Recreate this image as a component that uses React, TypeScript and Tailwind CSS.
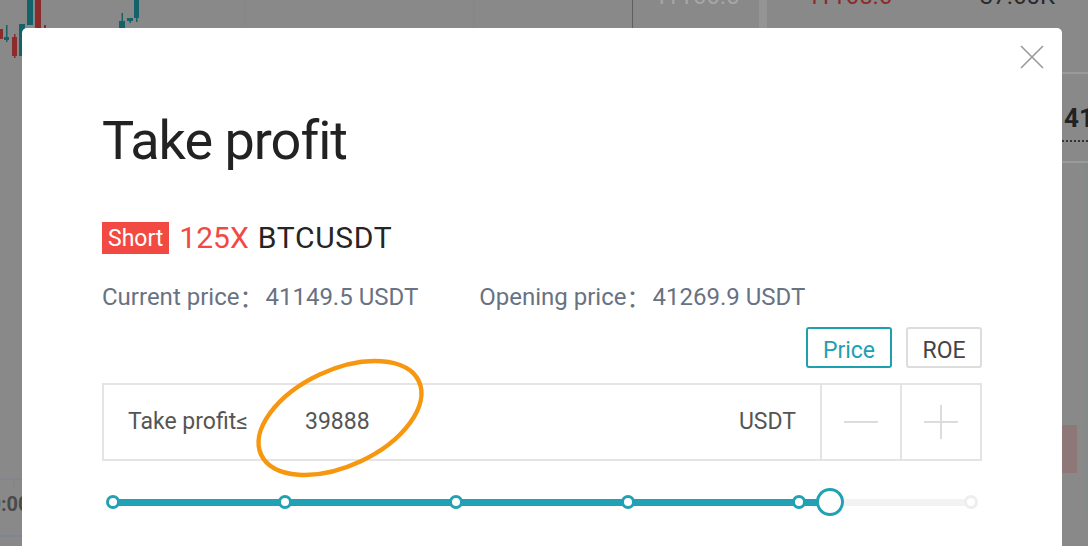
import React from 'react';

const candles = [
  { x: 0, w: 3, top: 29, bottom: 39, wt: 29, wb: 39, c: '#8b2b2b' },
  { x: 4, w: 5, top: 37, bottom: 40, wt: 25, wb: 42, c: '#14626a' },
  { x: 12, w: 5, top: 37, bottom: 56, wt: 34, wb: 58, c: '#8b2b2b' },
  { x: 19, w: 6, top: 24, bottom: 56, wt: 24, wb: 56, c: '#14626a' },
  { x: 27, w: 6, top: 0, bottom: 25, wt: 0, wb: 25, c: '#14626a' },
  { x: 35, w: 6, top: 0, bottom: 28, wt: 0, wb: 28, c: '#8b2b2b' },
  { x: 44, w: 2, top: 25, bottom: 30, wt: 25, wb: 30, c: '#8b2b2b' },
  { x: 119, w: 6, top: 21, bottom: 28, wt: 13, wb: 28, c: '#14626a' },
  { x: 127, w: 6, top: 18, bottom: 21, wt: 18, wb: 23, c: '#14626a' },
  { x: 134, w: 5, top: 0, bottom: 18, wt: 0, wb: 22, c: '#14626a' },
];

const Backdrop = () => (
  <div className="flex h-full w-full">
    {/* chart */}
    <div className="relative h-full w-[633px] shrink-0 border-r border-[#5f5f5f]">
      <svg className="absolute inset-0" width="633" height="546">
        <line x1="245" y1="0" x2="245" y2="546" stroke="#858585" />
        <line x1="474" y1="0" x2="474" y2="546" stroke="#858585" />
        {candles.map((k, i) => (
          <g key={i}>
            <rect x={k.x + k.w / 2 - 0.5} y={k.wt} width="1.5" height={k.wb - k.wt} fill={k.c} />
            <rect x={k.x} y={k.top} width={k.w} height={k.bottom - k.top} fill={k.c} />
          </g>
        ))}
        <line x1="0" y1="479" x2="633" y2="479" stroke="#7d8290" />
        <line x1="14" y1="479" x2="14" y2="488" stroke="#7d8290" />
        <line x1="0" y1="536" x2="633" y2="536" stroke="#7d8694" strokeWidth="2" />
      </svg>
      <span className="absolute left-[-22px] top-[494px] text-[20px] font-bold leading-none text-[#4a4a4a]">10:00</span>
    </div>
    {/* price axis */}
    <div className="flex h-full w-[126px] shrink-0 justify-center overflow-hidden">
      <span className="mt-[-16px] text-[24px] leading-none text-[#a6a6a6]">41166.0</span>
    </div>
    <div className="h-full w-[8px] shrink-0 bg-[#949494]" />
    {/* order book */}
    <div className="flex h-full min-w-0 flex-1">
      <div className="flex w-[295px] shrink-0 items-start justify-between overflow-hidden pl-[38px] pr-[7px]">
        <span className="mt-[-16px] text-[24px] leading-none text-[#8b2b2b]">41165.6</span>
        <span className="mt-[-16px] text-[24px] leading-none text-[#2a2a2a]">37.60K</span>
      </div>
      <div className="relative flex min-w-0 flex-1 flex-col overflow-hidden">
        <div className="mt-[72px] h-[2px] bg-[#9a9a9a]" />
        <span className="mt-[31px] whitespace-nowrap pl-[2px] text-[26px] font-bold leading-none text-[#222]">41149.5</span>
        <div className="mt-[9px] border-t-2 border-dotted border-[#333]" />
        <div className="mt-[19px] h-[2px] bg-[#9a9a9a]" />
        <div className="mt-[262px] h-[48px] w-[15px] bg-[#8d7777]" />
        <div className="absolute right-0 top-[163px] h-[354px] w-[3px] bg-[#828b89]" />
      </div>
    </div>
  </div>
);

const dots = [0, 20, 40, 60, 80];

const Slider = () => (
  <div className="mt-[26px] flex h-[30px] items-center px-[11px]">
    <div className="relative h-[7px] w-full rounded-full bg-[#f2f2f2]">
      <div className="absolute left-0 top-0 h-full w-[83.6%] bg-[#21a1b3]" />
      {dots.map((p) => (
        <div
          key={p}
          className="absolute top-1/2 h-[14px] w-[14px] -translate-x-1/2 -translate-y-1/2 rounded-full border-[3px] border-[#21a1b3] bg-white"
          style={{ left: `${p}%` }}
        />
      ))}
      <div className="absolute left-full top-1/2 h-[14px] w-[14px] -translate-x-1/2 -translate-y-1/2 rounded-full border-[3px] border-[#eeeeee] bg-white" />
      <div className="absolute left-[83.6%] top-1/2 h-[28px] w-[28px] -translate-x-1/2 -translate-y-1/2 rounded-full border-[3px] border-[#21a1b3] bg-white" />
    </div>
  </div>
);

const Modal = () => (
  <div className="absolute left-[22px] top-[28px] h-[530px] w-[1040px] rounded-t-[5px] bg-white px-[80px] pt-[83px]">
    <button className="absolute right-[18px] top-[17px] h-[24px] w-[24px]">
      <svg width="24" height="24" viewBox="0 0 24 24">
        <path d="M1 1 L23 23 M23 1 L1 23" stroke="#999" strokeWidth="1.6" fill="none" />
      </svg>
    </button>

    <h1 className="flex h-[60px] items-center text-[54px] leading-none tracking-[-1px] text-[#222]">Take profit</h1>

    <div className="mt-[51px] flex h-[32px] items-center text-[30px] leading-none">
      <span className="flex h-[32px] items-center bg-[#f24a42] px-[6px] text-[23px] text-white">Short</span>
      <span className="ml-[10px] text-[#f24a42]">125X</span>
      <span className="ml-[9px] tracking-[0.7px] text-[#252525]">BTCUSDT</span>
    </div>

    <div className="mt-[31px] flex h-[24px] items-center text-[24px] leading-none text-[#687283]">
      <span>Current price</span>
      <span className="font-['Noto_Sans_CJK_SC',sans-serif]">：</span>
      <span className="ml-[2px]">41149.5 USDT</span>
      <span className="ml-[61px]">Opening price</span>
      <span className="font-['Noto_Sans_CJK_SC',sans-serif]">：</span>
      <span className="ml-[2px]">41269.9 USDT</span>
    </div>

    <div className="mt-[18px] flex h-[41px] justify-end gap-[14px] text-[23px]">
      <button className="h-full w-[86px] rounded-[3px] border-2 border-[#1ea0b1] pt-[5px] text-[#1ea0b1]">Price</button>
      <button className="h-full w-[76px] rounded-[3px] border-2 border-[#dddddd] pt-[5px] text-[#444]">ROE</button>
    </div>

    <div className="mt-[15px] flex h-[78px] border-2 border-[#e4e4e4] text-[23px] text-[#555]">
      <div className="flex flex-1 items-center pl-[24px] pr-[24px]">
        <span className="w-[177px]">Take profit≤</span>
        <span className="flex-1">39888</span>
        <span>USDT</span>
      </div>
      <div className="flex w-[80px] items-center justify-center border-l-2 border-[#e4e4e4]">
        <div className="h-[2px] w-[34px] bg-[#dcdcdc]" />
      </div>
      <div className="relative flex w-[80px] items-center justify-center border-l-2 border-[#e4e4e4]">
        <div className="h-[2px] w-[34px] bg-[#dcdcdc]" />
        <div className="absolute h-[34px] w-[2px] bg-[#dcdcdc]" />
      </div>
    </div>

    <Slider />
  </div>
);

export default function App() {
  return (
    <div className="relative h-[546px] w-[1088px] overflow-hidden bg-[#898989] font-['Roboto','Noto_Sans',sans-serif]">
      <Backdrop />
      <Modal />
      {/* hand-drawn annotation */}
      <svg className="pointer-events-none absolute left-[240px] top-[348px]" width="200" height="140" viewBox="0 0 200 140">
        <ellipse cx="100" cy="70" rx="87" ry="48" transform="rotate(-25 100 70)" fill="none" stroke="#f7960f" strokeWidth="4.5" />
      </svg>
    </div>
  );
}
